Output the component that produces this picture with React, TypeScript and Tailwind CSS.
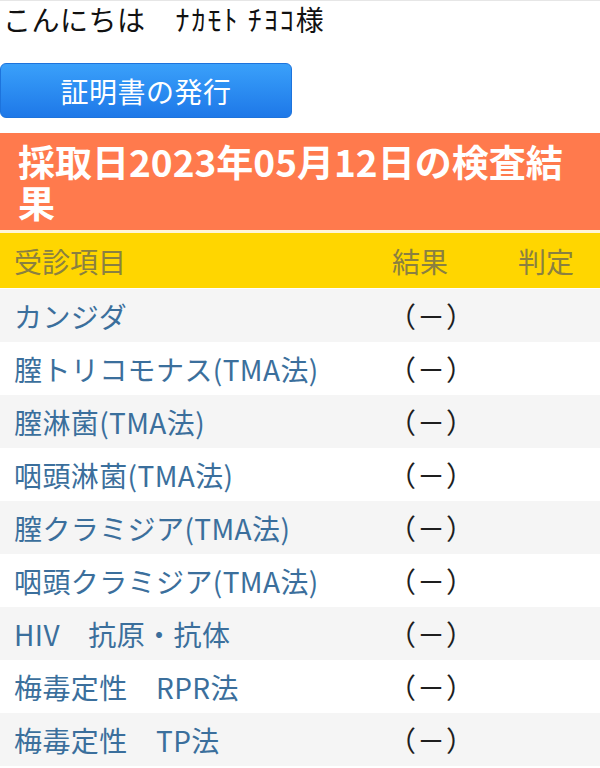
import React from "react";

const rows = [
  "カンジダ",
  "膣トリコモナス(TMA法)",
  "膣淋菌(TMA法)",
  "咽頭淋菌(TMA法)",
  "膣クラミジア(TMA法)",
  "咽頭クラミジア(TMA法)",
  "HIV　抗原・抗体",
  "梅毒定性　RPR法",
  "梅毒定性　TP法",
];

export default function App() {
  return (
    <div
      className="w-[600px] min-h-[768px] bg-white overflow-hidden"
      style={{ fontFamily: '"Noto Sans CJK JP", "Noto Sans", sans-serif' }}
    >
      <div className="border-t border-[#e6e6e6] h-[40px] flex items-center pl-[3px] pb-[3px] text-[28px] leading-none text-[#111]">
        <span className="tracking-[0.5px]">こんにちは</span>
        <span className="ml-[30px] tracking-[2px]">ﾅｶﾓﾄ ﾁﾖｺ様</span>
      </div>
      <div className="pt-[23px] pb-[15px]">
        <button className="w-[292px] h-[55px] rounded-[6px] border border-[#1d73dc] bg-gradient-to-b from-[#3aa0fa] to-[#1e78e8] text-white text-[28px] leading-none flex items-center justify-center tracking-[0.5px]">
          証明書の発行
        </button>
      </div>
      <div className="bg-[#ff7a4d] text-white font-semibold text-[37px] leading-[41px] pl-[18px] pr-[10px] pt-[8px] pb-[5px] h-[97px]">
        採取日2023年05月12日の検査結果
      </div>
      <div className="h-[3px] bg-[#fff6d6]" />
      <div className="bg-[#ffd600] h-[55px] flex items-center text-[28px] leading-none text-[#8a8040]">
        <div className="w-[392px] pl-[14px]">受診項目</div>
        <div className="w-[126px]">結果</div>
        <div className="flex-1">判定</div>
      </div>
      <div className="h-[1px] bg-white" />
      {rows.map((r, i) => (
        <div
          key={i}
          className={
            "h-[53px] flex items-center text-[28px] leading-none " +
            (i % 2 === 0 ? "bg-[#f5f5f5]" : "bg-white")
          }
        >
          <div className="w-[388px] pl-[14px] text-[#3b6f9c] whitespace-nowrap tracking-[0.4px]">{r}</div>
          <div className="w-[130px] text-[#1e1e1e] whitespace-nowrap tracking-[1px]">（－）</div>
          <div className="flex-1" />
        </div>
      ))}
    </div>
  );
}
